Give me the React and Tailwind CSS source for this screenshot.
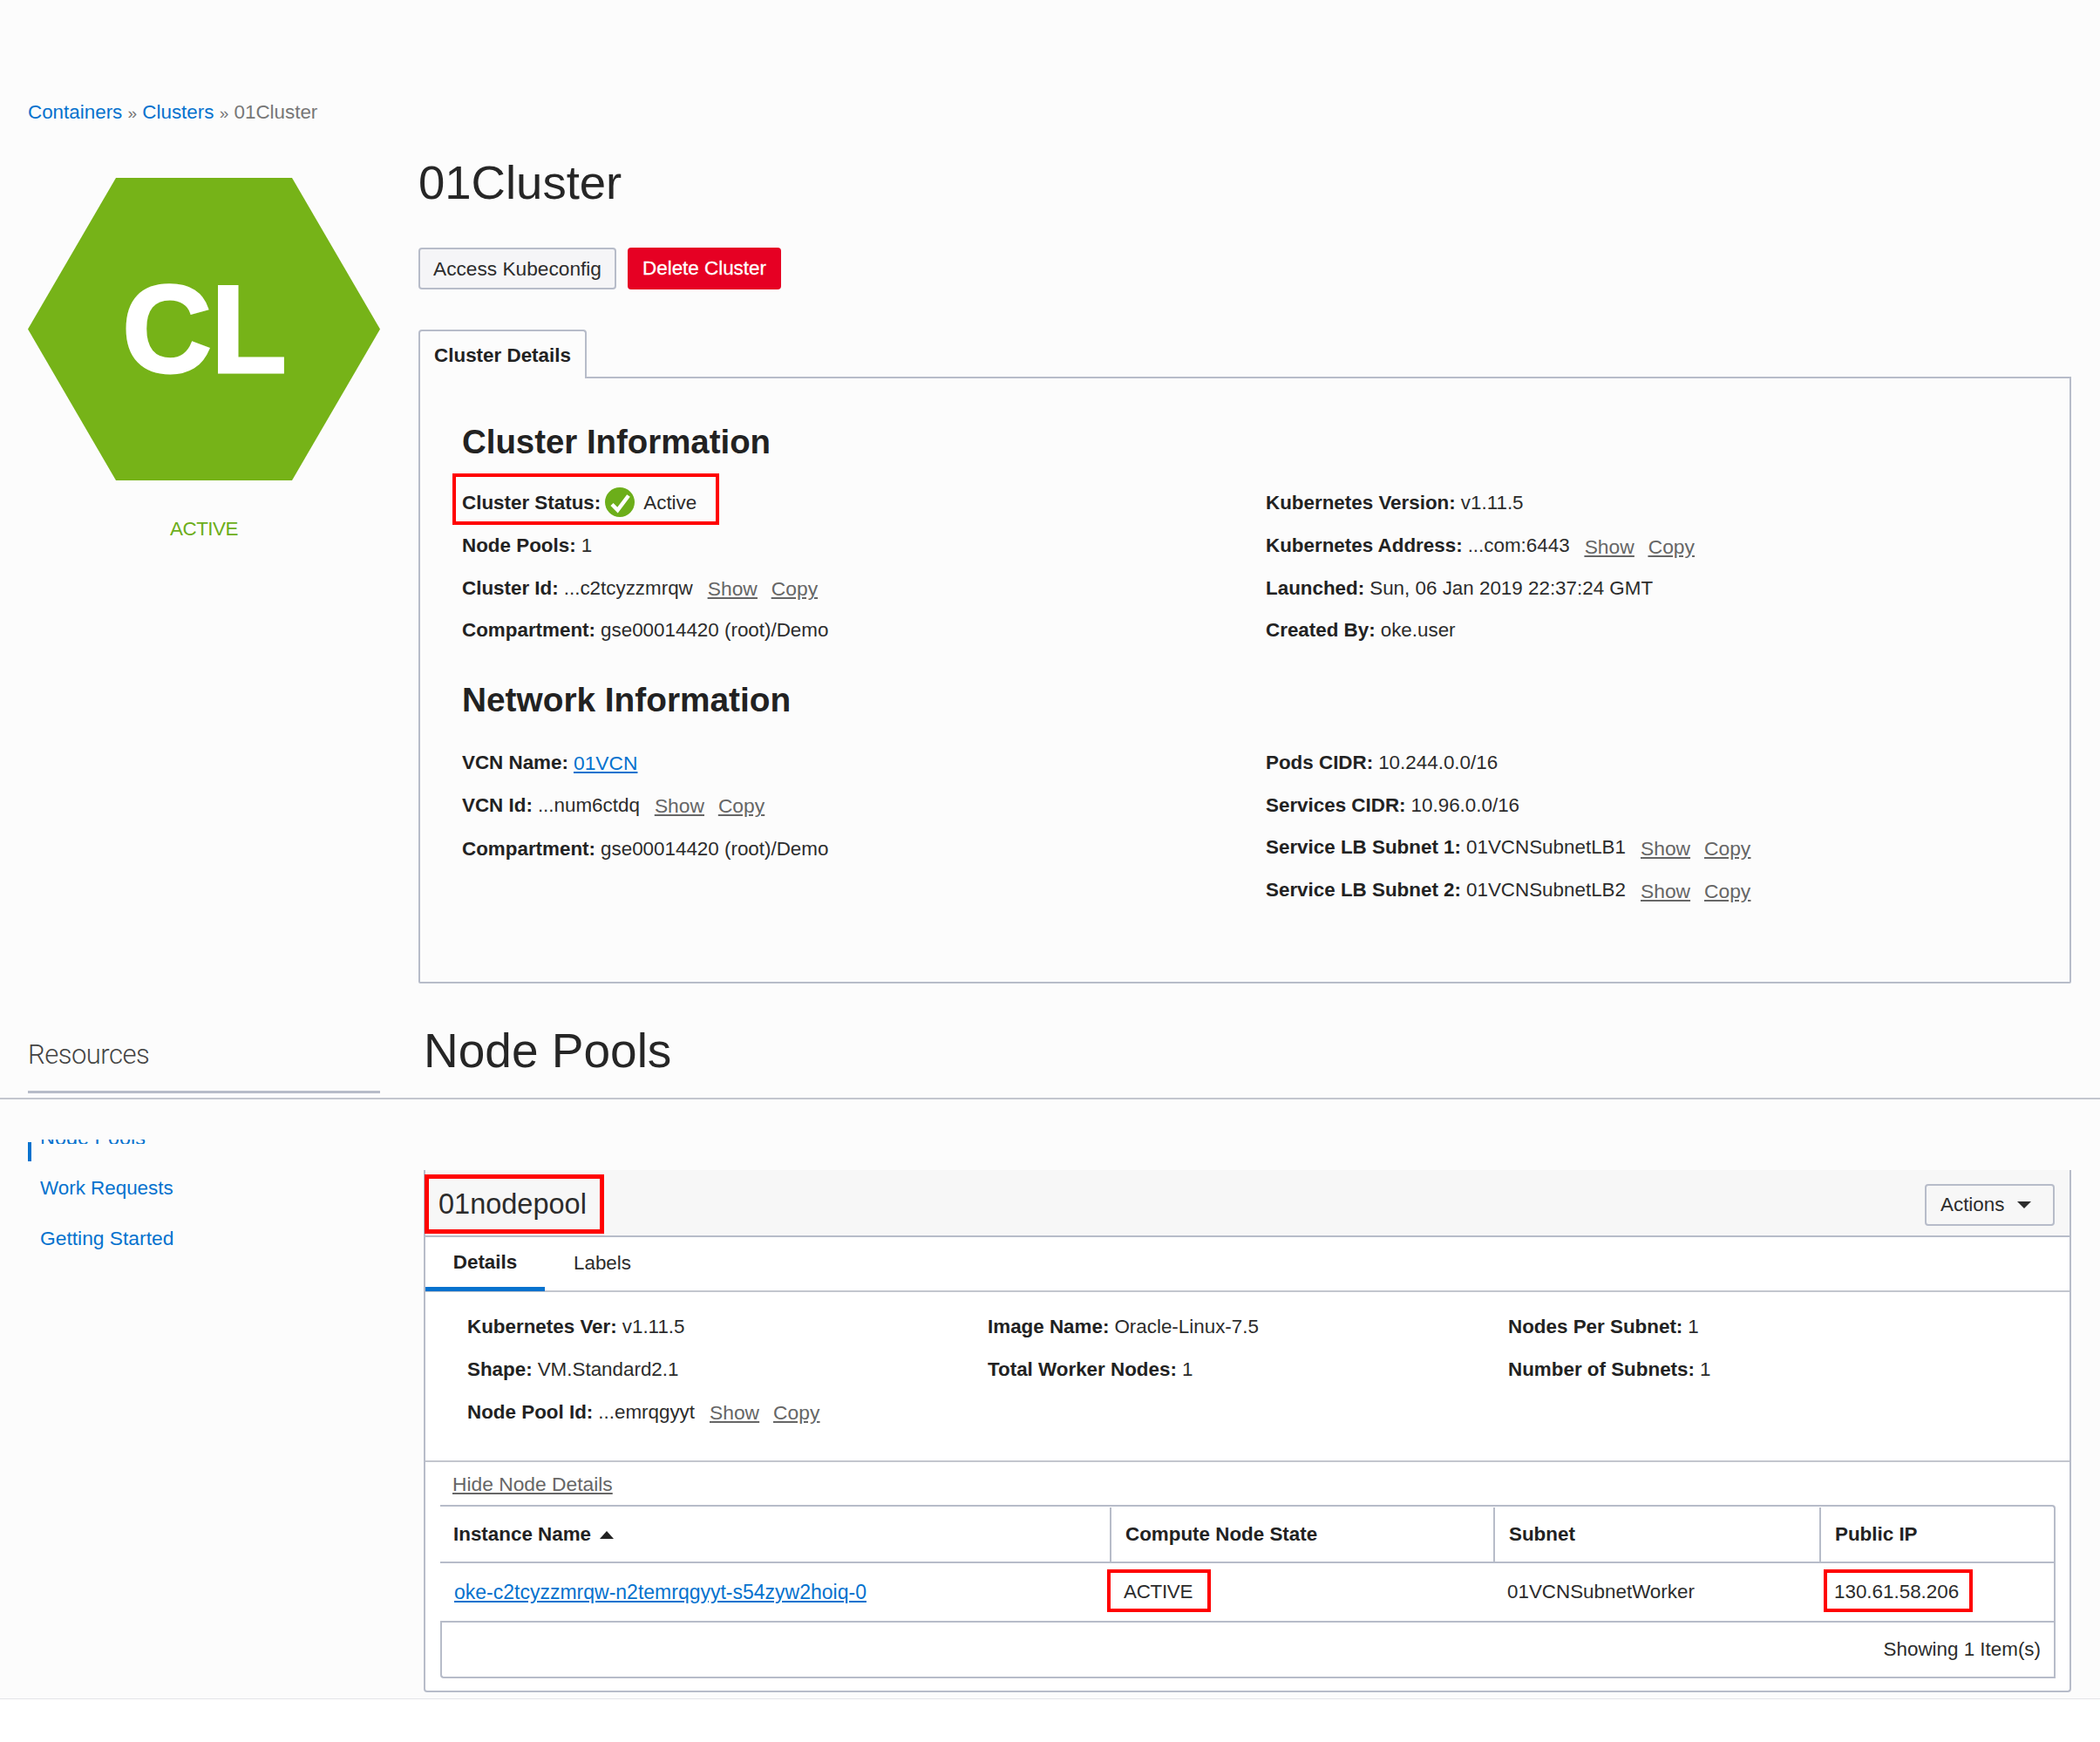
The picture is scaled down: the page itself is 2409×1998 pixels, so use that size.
const sans = { fontFamily: '"Liberation Sans", Arial, sans-serif' }

function Field({ label, value, link, actions }) {
  return (
    <div className="flex items-center h-[48.7px] pt-[2px] whitespace-nowrap">
      <b className="font-bold text-[#222]">{label}:</b>
      <span className="ml-[6px]">
        {link ? <a className="text-[#0572ce] underline text-[22.8px]">{value}</a> : value}
      </span>
      {actions && (
        <span className="flex gap-[16px] ml-[17px] mt-[1px] text-[22.8px] text-[#666] underline">
          <a>Show</a>
          <a>Copy</a>
        </span>
      )}
    </div>
  )
}

function Hexagon() {
  return (
    <div className="relative w-[404px] h-[347px] flex items-center justify-center">
      <svg className="absolute inset-0" width="404" height="347" viewBox="0 0 404 347">
        <polygon points="101,0 303,0 404,173.5 303,347 101,347 0,173.5" fill="#76b318" />
      </svg>
      <span className="relative text-white font-bold text-[142px] leading-none tracking-[-1px] [-webkit-text-stroke:3px_white]">CL</span>
    </div>
  )
}

export default function App() {
  return (
    <div className="w-[2409px] h-[1998px] bg-white text-[22.4px] leading-[28px] text-[#2c2c2c] overflow-hidden" style={sans}>
      <div className="h-[1949px] bg-[#fcfcfc] border-b border-[#e3e4e8]">
        {/* Breadcrumb */}
        <div className="pl-[32px] pt-[115px] h-[204px] text-[#777]">
          <a className="text-[#0572ce]">Containers</a> <span className="text-[19px]">»</span> <a className="text-[#0572ce]">Clusters</a> <span className="text-[19px]">»</span> 01Cluster
        </div>

        {/* Top section */}
        <div className="flex pl-[32px] h-[923px]">
          <div className="w-[404px]">
            <Hexagon />
            <div className="text-center mt-[42px] text-[#6cae1a] tracking-[-0.5px]">ACTIVE</div>
          </div>
          <div className="ml-[44px] w-[1896px] -mt-[30px]">
            <h1 className="text-[54.5px] leading-[70px] h-[70px] text-[#262626] pt-[1px]">01Cluster</h1>
            <div className="flex gap-[13px] mt-[40px]">
              <button className="h-[48px] w-[227px] bg-[#f5f5f7] border-2 border-[#b7bcc9] rounded-[4px] text-[22.7px]">Access Kubeconfig</button>
              <button className="h-[48px] w-[176px] bg-[#e60023] text-white rounded-[4px] [-webkit-text-stroke:0.3px_white]">Delete Cluster</button>
            </div>
            {/* Tab */}
            <div className="relative z-10 mt-[46px] w-[193px] h-[56px] pt-[2px] border-2 border-b-0 border-[#b7bcc9] rounded-t-[4px] bg-[#fcfcfc] flex items-center justify-center font-bold text-[#222]">
              Cluster Details
            </div>
            <div className="-mt-[2px] h-[696px] border-2 border-[#b7bcc9] rounded-b-[2px] pl-[48px] pt-[50px]">
              <h2 className="text-[38.4px] leading-[46px] font-bold text-[#222]">Cluster Information</h2>
              <div className="grid grid-cols-[922px_1fr] mt-[22px]">
                <div>
                  <div className="flex items-center h-[48.7px]">
                    <div className="flex items-center h-[59px] w-[306px] -ml-[11px] pl-[7px] -mt-[7px] pt-[9px] border-4 border-[#ff0000] whitespace-nowrap">
                      <b className="font-bold text-[#222]">Cluster Status:</b>
                      <svg className="ml-[5px] -mt-[2px]" width="34" height="34" viewBox="0 0 34 34">
                        <circle cx="17" cy="17" r="17" fill="#6cae1a" />
                        <path d="M8 19.5 L14.5 26 L27 9.5" fill="none" stroke="#fff" strokeWidth="4.5" />
                      </svg>
                      <span className="ml-[10px]">Active</span>
                    </div>
                  </div>
                  <Field label="Node Pools" value="1" />
                  <Field label="Cluster Id" value="...c2tcyzzmrqw" actions />
                  <Field label="Compartment" value="gse00014420 (root)/Demo" />
                </div>
                <div>
                  <Field label="Kubernetes Version" value="v1.11.5" />
                  <Field label="Kubernetes Address" value="...com:6443" actions />
                  <Field label="Launched" value="Sun, 06 Jan 2019 22:37:24 GMT" />
                  <Field label="Created By" value="oke.user" />
                </div>
              </div>
              <h2 className="mt-[33px] text-[38.8px] leading-[46px] font-bold text-[#222]">Network Information</h2>
              <div className="grid grid-cols-[922px_1fr] mt-[24px]">
                <div>
                  <Field label="VCN Name" value="01VCN" link />
                  <Field label="VCN Id" value="...num6ctdq" actions />
                  <div className="pt-[2px]"><Field label="Compartment" value="gse00014420 (root)/Demo" /></div>
                </div>
                <div>
                  <Field label="Pods CIDR" value="10.244.0.0/16" />
                  <Field label="Services CIDR" value="10.96.0.0/16" />
                  <Field label="Service LB Subnet 1" value="01VCNSubnetLB1" actions />
                  <Field label="Service LB Subnet 2" value="01VCNSubnetLB2" actions />
                </div>
              </div>
            </div>
          </div>
        </div>

        {/* Resources / Node Pools header */}
        <div className="h-[134px] border-b-2 border-[#c3c6ce] flex pl-[32px]">
          <div className="w-[404px] h-[127px] border-b-[3px] border-[#b7bcc9] pt-[65px]">
            <span className="text-[31px] leading-[36px] tracking-[-0.5px] text-[#444]" style={{ fontFamily: 'Roboto, sans-serif', fontWeight: 300 }}>Resources</span>
          </div>
          <h1 className="ml-[50px] pt-[46px] text-[55px] leading-[64px] text-[#262626]">Node Pools</h1>
        </div>

        {/* Lower section */}
        <div className="flex pl-[32px]">
          <div className="w-[404px] pt-[46px] text-[#0572ce]">
            <div className="flex">
              <div className="w-[4px] h-[22px] mt-[3px] bg-[#0572ce]" />
              <div className="ml-[10px] h-[5px] overflow-hidden">
                <div className="-mt-[16px] text-[23.4px]">Node Pools</div>
              </div>
            </div>
            <div className="ml-[14px] mt-[17px]">Work Requests</div>
            <div className="ml-[14px] mt-[29px] text-[22.8px]">Getting Started</div>
          </div>

          <div className="ml-[50px] mt-[81px] w-[1890px] h-[599px] border-2 border-t-0 border-[#b7bcc9] rounded-b-[4px] bg-white">
            {/* Card header */}
            <div className="h-[77px] bg-[#f7f7f7] border-b-2 border-[#b7bcc9] flex items-start justify-between pr-[17px] -mx-[2px] border-x-2 border-x-[#b7bcc9]">
              <div className="mt-[5px] -ml-[1px] w-[206px] h-[68px] border-[5px] border-[#ff0000] pl-[11px] flex items-center text-[32.5px] text-[#2c2c2c]">01nodepool</div>
              <button className="mt-[16px] w-[149px] h-[48px] border-2 border-[#b7bcc9] rounded-[4px] flex items-center pl-[16px] gap-[15px]">
                Actions
                <svg width="16" height="8" viewBox="0 0 16 8"><polygon points="0,0 16,0 8,8" fill="#2c2c2c" /></svg>
              </button>
            </div>
            {/* Tabs */}
            <div className="flex h-[63px] border-b-2 border-[#c3c6ce]">
              <div className="w-[137px] h-[62px] border-b-[5px] border-[#0572ce] flex items-center justify-center font-bold text-[#222] pt-[1px]">Details</div>
              <div className="ml-[33px] h-[60px] flex items-center">Labels</div>
            </div>
            {/* Detail fields */}
            <div className="h-[195px] border-b-2 border-[#c3c6ce] pt-[15px] pl-[48px] grid grid-cols-[597px_597px_1fr] content-start">
              <div>
                <Field label="Kubernetes Ver" value="v1.11.5" />
                <Field label="Shape" value="VM.Standard2.1" />
                <Field label="Node Pool Id" value="...emrqgyyt" actions />
              </div>
              <div>
                <Field label="Image Name" value="Oracle-Linux-7.5" />
                <Field label="Total Worker Nodes" value="1" />
              </div>
              <div>
                <Field label="Nodes Per Subnet" value="1" />
                <Field label="Number of Subnets" value="1" />
              </div>
            </div>
            <div className="h-[49px] pl-[31px] flex items-center text-[#666] text-[22.8px]"><a className="underline">Hide Node Details</a></div>
            {/* Instance table */}
            <div className="ml-[17px] w-[1853px] border-t-2 border-r-2 border-[#b7bcc9] rounded-tr-[4px]">
              <div className="grid grid-cols-[768px_440px_374px_1fr] h-[65px] pt-[1px] border-b-2 border-[#b7bcc9] font-bold text-[#222]">
                <div className="pl-[15px] flex items-center gap-[10px]">
                  Instance Name
                  <svg width="16" height="9" viewBox="0 0 16 9"><polygon points="8,0 16,9 0,9" fill="#222" /></svg>
                </div>
                <div className="pl-[16px] flex items-center border-l-2 border-[#b7bcc9]">Compute Node State</div>
                <div className="pl-[16px] flex items-center border-l-2 border-[#b7bcc9]">Subnet</div>
                <div className="pl-[16px] flex items-center border-l-2 border-[#b7bcc9]">Public IP</div>
              </div>
              <div className="grid grid-cols-[768px_440px_374px_1fr] h-[66px] items-center">
                <div className="pl-[16px]"><a className="text-[#0572ce] underline text-[23px]">oke-c2tcyzzmrqw-n2temrqgyyt-s54zyw2hoiq-0</a></div>
                <div className="-ml-[3px]"><span className="flex items-center w-[119px] h-[49px] -mt-[4px] pt-[4px] border-4 border-[#ff0000] pl-[15px] tracking-[-0.3px]">ACTIVE</span></div>
                <div className="pl-[16px]">01VCNSubnetWorker</div>
                <div className="pl-[5px]"><span className="flex items-center w-[171px] h-[49px] -mt-[4px] pt-[4px] border-4 border-[#ff0000] pl-[8px]">130.61.58.206</span></div>
              </div>
              <div className="h-[66px] border-2 border-r-0 border-[#b7bcc9] rounded-bl-[4px] flex items-center justify-end pr-[15px]">Showing 1 Item(s)</div>
            </div>
          </div>
        </div>
      </div>
    </div>
  )
}
